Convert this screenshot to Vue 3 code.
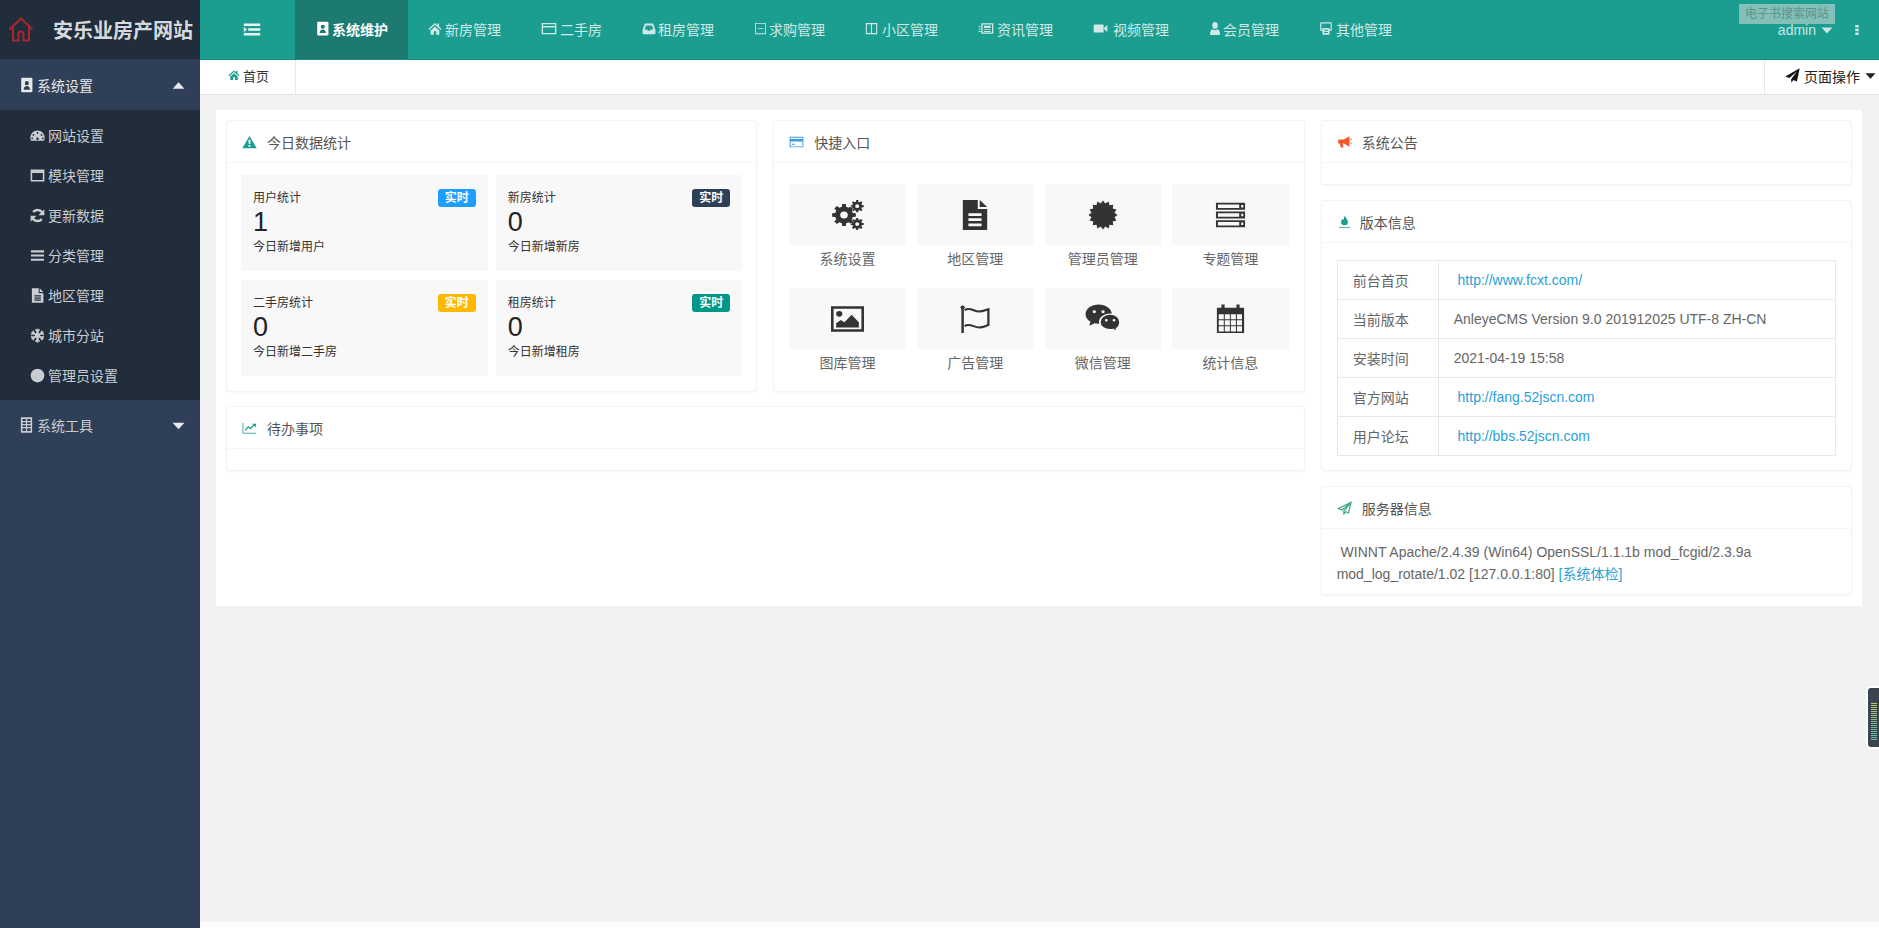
<script setup>
import { h } from 'vue'

function gear(cx, cy, R, r, hole, n) {
  let d = ''
  const step = (Math.PI * 2) / n
  for (let i = 0; i < n; i++) {
    const a = i * step
    const pts = [
      [r, a - step * 0.5],
      [r, a - step * 0.3],
      [R, a - step * 0.2],
      [R, a + step * 0.2],
      [r, a + step * 0.3],
    ]
    pts.forEach(([rad, t], k) => {
      d += (i === 0 && k === 0 ? 'M' : 'L') + (cx + rad * Math.cos(t)).toFixed(2) + ' ' + (cy + rad * Math.sin(t)).toFixed(2)
    })
  }
  d += `Z M${cx - hole} ${cy}a${hole} ${hole} 0 1 0 ${hole * 2} 0a${hole} ${hole} 0 1 0 ${-hole * 2} 0Z`
  return d
}
function burst(cx, cy, R, r, n) {
  let d = ''
  for (let i = 0; i < n * 2; i++) {
    const t = (i * Math.PI) / n
    const rad = i % 2 ? r : R
    d += (i ? 'L' : 'M') + (cx + rad * Math.cos(t)).toFixed(2) + ' ' + (cy + rad * Math.sin(t)).toFixed(2)
  }
  return d + 'Z'
}
function calendar() {
  let d = 'M1 5h5V1.500h3.500V5h13V1.500H26V5h5v26H1z'
  for (let r = 0; r < 3; r++) {
    for (let c = 0; c < 4; c++) {
      d += ` M${3 + c * 6.7} ${11.500 + r * 6.300}h5.600v5.200h-5.600z`
    }
  }
  return d
}

const paths = {
  contact: 'M5 1h15a1.500 1.500 0 0 1 1.500 1.500v19a1.500 1.500 0 0 1-1.500 1.500H5a1.500 1.500 0 0 1-1.500-1.500V2.500A1.500 1.500 0 0 1 5 1z M12.500 6a3 3 0 1 0 0 6.500 3 3 0 0 0 0-6.500z M7.500 19h10c0-3.500-2-5.500-5-5.500s-5 2-5 5.500z',
  indent: 'M1 2.500h22v4H1z M7 10h16v4H7z M1 17.500h22v4H1z M1 8l4.500 4L1 16z',
  home: 'M12 3 .8 12.700l1.500 1.600L12 6l9.700 8.300 1.500-1.600L19 9V4h-3v2.400z M4.500 15 12 8.600l7.500 6.400v7H14v-5.500h-4V22H4.500z',
  card: 'M1 3h22v18H1z M3 5v3h18V5z M3 10.500V19h18v-8.500z',
  inbox: 'M5 4h14l4 10v5.500a1.500 1.500 0 0 1-1.500 1.500h-19A1.500 1.500 0 0 1 1 19.500V14z M7 7l-2.500 6.500H9l1 2h4l1-2h4.500L17 7z',
  form: 'M2 3h20v18H2z M3.500 4.500v15h17v-15z M7 11h10v1.500H7z',
  columns: 'M1.500 3h21v18h-21z M3.500 5v14H11V5z M13 5v14h7.500V5z',
  news: 'M5 3.500h18v17H5z M7 5.500v13h14v-13z M9 7.500h10v3.500H9z M9 13h10v1.500H9z M9 16h10v1.500H9z M1 8h3v1.500H1z M1 12h3v1.500H1z M1 16h3v1.500H1z',
  video: 'M2.500 5.500h13a1.500 1.500 0 0 1 1.500 1.500v10a1.500 1.500 0 0 1-1.500 1.500h-13A1.500 1.500 0 0 1 1 17V7a1.500 1.500 0 0 1 1.500-1.500z M23 6.500v11l-5-4v-3z',
  user: 'M12 1.500a5.500 5.500 0 1 1 0 11 5.500 5.500 0 0 1 0-11z M4 22.500c-1.200 0-2-.8-2-2C2 16 4.500 13 8 13c1 1 2.500 1.500 4 1.500s3-.5 4-1.500c3.500 0 6 3 6 7.500 0 1.200-.8 2-2 2z',
  other: 'M4 2h16a2 2 0 0 1 2 2v10a2 2 0 0 1-2 2h-2v6H6v-6H4a2 2 0 0 1-2-2V4a2 2 0 0 1 2-2z M4 4v10h2v-3h12v3h2V4z M8.500 14h7v1.500h-7z M8.500 17.500h7V19h-7z',
  gauge: 'M12 4a11.500 11.500 0 0 1 11.500 11.500c0 2-.5 3.500-1.300 5H1.800C1 19 .5 17.500.5 15.500A11.500 11.500 0 0 1 12 4z M12 6.500a1.500 1.500 0 1 0 0 3 1.500 1.500 0 0 0 0-3z M5.500 9.500a1.500 1.500 0 1 0 0 3 1.500 1.500 0 0 0 0-3z M18.500 9.500a1.500 1.500 0 1 0 0 3 1.500 1.500 0 0 0 0-3z M3.500 15a1.500 1.500 0 1 0 0 3 1.500 1.500 0 0 0 0-3z M20.500 15a1.500 1.500 0 1 0 0 3 1.500 1.500 0 0 0 0-3z M10 17a2 2 0 1 0 4 0 2 2 0 0 0-4 0z',
  window: 'M1 2.500h22v19H1z M3.500 8v11h17V8z',
  bars: 'M1.500 3.500h21v3.500h-21z M1.500 10.250h21v3.500h-21z M1.500 17h21v3.500h-21z',
  file: 'M3 .5h11v8h7.500v15H3z M15.500 .5l6 6h-6z M7 11.500h10.500v2H7z M7 15h10.500v2H7z M7 18.500h10.500v2H7z',
  circle: 'M12 1a11 11 0 1 1 0 22 11 11 0 0 1 0-22z',
  building: 'M3 .5h18v23H3z M5.500 3v3h5.500V3z M13 3v3h5.500V3z M5.500 8v2.500h5.500V8z M13 8v2.500h5.500V8z M5.500 12.500V15h5.500v-2.500z M13 12.500V15h5.500v-2.500z M5.500 17v4h5.500v-4z M13 17v4h5.500v-4z',
  warn: 'M12 1.500 23.500 22.500H.5z M10.300 8l.5 7.500h2.400l.5-7.500z M10.500 17v3h3v-3z',
  creditcard: 'M1 3h22v18H1z M2.500 4.500V7h19V4.500z M2.500 11v8.500h19V11z M4.500 15h5v1.500h-5z',
  horn: 'M2 7.500h9l9-5.500v18l-9-5.500H9l1.500 7H6l-1.500-7H2z M21.500 7l2-1.500v2l-2 1.500z M21.500 14.500l2 1.500v-2l-2-1.500z',
  flame: 'M12.500 1c.5 4 5 6.500 5 11a5.500 5.500 0 0 1-11 0c0-2.500 1.500-3.500 2.500-5.500.5 1.200 1 1.800 1.700 2C11 6 11.500 3.500 12.500 1z M3 20.500h18V22H3z',
  plane: 'M23.500 .5.500 13.500l6.500 2.500L19 5.500 10 17.500V23.500l3.500-4.500 5.500 2.500z',
  up: 'M12 6 23 18H1z',
  down: 'M1 7h22L12 19z',
  dots: 'M9 2h6v5H9z M9 9.500h6v5H9z M9 17h6v5H9z',
  gears: gear(12, 16, 12, 9, 3.8, 8) + ' ' + gear(25.2, 6.6, 6.6, 4.9, 2, 8) + ' ' + gear(25.2, 25.6, 6.6, 4.9, 2, 8),
  doc: 'M3 0h16v9.500h10V32H3z M21 0l8 7.500h-8z M9 14h14v3H9z M9 19.500h14v3H9z M9 25h14v3H9z',
  burst: burst(16, 16, 15.5, 12.5, 16),
  server: 'M1 2h30v8H1z M3 4v4h22V4z M27 4.500h2.200v3H27z M1 12h30v8H1z M3 14v4h22v-4z M27 14.500h2.200v3H27z M1 22h30v8H1z M3 24v4h22v-4z M27 24.500h2.200v3H27z',
  image: 'M0 2.500h32v27H0z M2.500 5v22h27V5z M8 7.500a3 3 0 1 1 0 6 3 3 0 0 1 0-6z M5 25v-4.500l4.500-3.500 3.500 2.500 7-8 7 8V25z',
  calendar: calendar(),
}
const layered = {
  refresh: [
    { s: 'M20.500 9.500A9 9 0 0 0 5 6.500', w: 4 },
    { s: 'M3.500 14.500a9 9 0 0 0 15.500 3', w: 4 },
    { d: 'M23 2v9.500H13.500z M1 22v-9.500h9.500z' },
  ],
  snow: [
    { s: 'M12 1v22M2.500 6.500l19 11M2.500 17.500l19-11', w: 3.400 },
    { s: 'M8.500 2.500 12 6l3.500-3.500M8.500 21.500 12 18l3.500 3.500M1.500 10.500 6.500 9l-1.500-4.500M22.500 10.500 17.500 9l1.500-4.500M1.500 13.500 6.500 15l-1.500 4.500M22.500 13.500 17.500 15l1.500 4.500', w: 2 },
    { d: 'M12 7.500l4 2.300v4.400l-4 2.300-4-2.300V9.800z' },
  ],
  chart: [
    { s: 'M1.500 3v18h21', w: 1.300 },
    { s: 'M5 16l5-6 3.500 3L20 6', w: 2.200 },
    { d: 'M16 4.500h6.500V11z' },
  ],
  planeO: [{ s: 'M22.500 2 2 13l6 2.500 14.500-13.500L11 17.500V22l3-3.500 4.500 2z', w: 2 }],
  flag: [
    { s: 'M3.500 5v26', w: 2.400 },
    { d: 'M3.500 1.500a2 2 0 1 1 0 4 2 2 0 0 1 0-4z' },
    { s: 'M5.500 6.500c5-3.500 9 1.500 14 1.500 4 0 6-1.500 9-2.500v17c-3 1-5 2.500-9 2.500-5 0-9-5-14-1.500', w: 2.200 },
  ],
  wechat: [
    { d: 'M12.500 1.500C5.800 1.500 .5 6 .5 11.500c0 3.200 1.800 5.900 4.500 7.700L4 23.500l4.700-2.700c1.200.3 2.500.5 3.800.5 6.700 0 12-4.400 12-9.800S19.200 1.500 12.500 1.500z' },
    { d: 'M23 11.500c-5.300 0-9.500 3.600-9.500 8.100s4.200 8.100 9.500 8.100c1 0 2-.1 2.900-.4L29.500 30l-.8-3.400c1.900-1.500 3.300-4 3.300-7 0-4.500-3.700-8.100-9-8.100z', stroke: '#f8f8f8', w: 1.500 },
    { d: 'M8.500 7.500a1.500 1.500 0 1 0 0 3 1.500 1.500 0 0 0 0-3z M16.500 7.500a1.500 1.500 0 1 0 0 3 1.500 1.500 0 0 0 0-3z', fill: '#f8f8f8' },
    { d: 'M19.500 16.500a1.300 1.300 0 1 0 0 2.600 1.300 1.300 0 0 0 0-2.600z M26.500 16.500a1.300 1.300 0 1 0 0 2.600 1.300 1.300 0 0 0 0-2.600z', fill: '#f8f8f8' },
  ],
  house: [{ s: 'M1.500 13.500 13 2.500l11.500 11 M5 10.500V24.500h5.500V18a2.500 2.500 0 0 1 5 0v6.500H21V10.500', w: 2 }],
}

const BIG = new Set(['gears', 'doc', 'burst', 'server', 'image', 'calendar', 'flag', 'wechat'])

const Ico = (props) => {
  const vb = BIG.has(props.n) ? '0 0 32 32' : props.n === 'house' ? '0 0 26 26' : '0 0 24 24'
  const kids = paths[props.n]
    ? [h('path', { d: paths[props.n], fill: 'currentColor', 'fill-rule': 'evenodd' })]
    : (layered[props.n] || []).map((l) =>
        l.s
          ? h('path', { d: l.s, fill: 'none', stroke: 'currentColor', 'stroke-width': l.w })
          : h('path', { d: l.d, fill: l.fill || 'currentColor', stroke: l.stroke || 'none', 'stroke-width': l.w || 0, 'fill-rule': 'evenodd' }),
      )
  return h('svg', { viewBox: vb, preserveAspectRatio: 'none', 'aria-hidden': 'true' }, kids)
}
Ico.props = ['n']

const nav = [
  { t: '系统维护', i: 'contact', w: 15, g: 2, active: true },
  { t: '新房管理', i: 'home', w: 14, g: 3 },
  { t: '二手房', i: 'card', w: 16, g: 3 },
  { t: '租房管理', i: 'inbox', w: 14, g: 2 },
  { t: '求购管理', i: 'form', w: 13, g: 2 },
  { t: '小区管理', i: 'columns', w: 13, g: 4 },
  { t: '资讯管理', i: 'news', w: 16, g: 3 },
  { t: '视频管理', i: 'video', w: 15, g: 5 },
  { t: '会员管理', i: 'user', w: 12, g: 2 },
  { t: '其他管理', i: 'other', w: 14, g: 3 },
]
const subs = [
  { t: '网站设置', i: 'gauge' },
  { t: '模块管理', i: 'window' },
  { t: '更新数据', i: 'refresh' },
  { t: '分类管理', i: 'bars' },
  { t: '地区管理', i: 'file' },
  { t: '城市分站', i: 'snow' },
  { t: '管理员设置', i: 'circle' },
]
const stats = [
  { t: '用户统计', n: '1', s: '今日新增用户', c: 'blue' },
  { t: '新房统计', n: '0', s: '今日新增新房', c: 'navy' },
  { t: '二手房统计', n: '0', s: '今日新增二手房', c: 'amber' },
  { t: '租房统计', n: '0', s: '今日新增租房', c: 'teal' },
]
const quick = [
  { t: '系统设置', i: 'gears', w: 32, hh: 30 },
  { t: '地区管理', i: 'doc', w: 30, hh: 30 },
  { t: '管理员管理', i: 'burst', w: 30, hh: 30 },
  { t: '专题管理', i: 'server', w: 31, hh: 28 },
  { t: '图库管理', i: 'image', w: 33, hh: 30 },
  { t: '广告管理', i: 'flag', w: 33, hh: 30 },
  { t: '微信管理', i: 'wechat', w: 35, hh: 31 },
  { t: '统计信息', i: 'calendar', w: 29, hh: 31 },
]
const info = [
  { k: '前台首页', v: 'http://www.fcxt.com/', link: true },
  { k: '当前版本', v: 'AnleyeCMS Version 9.0 201912025 UTF-8 ZH-CN' },
  { k: '安装时间', v: '2021-04-19 15:58' },
  { k: '官方网站', v: 'http://fang.52jscn.com', link: true },
  { k: '用户论坛', v: 'http://bbs.52jscn.com', link: true },
]
</script>

<template>
  <div class="app">
    <aside class="side">
      <div class="brand">
        <Ico n="house" class="logo" />
        <span class="brand-text">安乐业房产网站</span>
      </div>
      <div class="group">
        <Ico n="contact" class="gi" />
        <span class="gt">系统设置</span>
        <Ico n="up" class="caret" />
      </div>
      <ul class="sub">
        <li v-for="s in subs" :key="s.t">
          <Ico :n="s.i" class="si" />
          <span>{{ s.t }}</span>
        </li>
      </ul>
      <div class="group dim">
        <Ico n="building" class="gi" />
        <span class="gt">系统工具</span>
        <Ico n="down" class="caret" />
      </div>
    </aside>

    <div class="main">
      <header class="top">
        <div class="toggle"><Ico n="indent" class="toggle-i" /></div>
        <nav class="nav">
          <a v-for="n in nav" :key="n.t" class="nav-item" :class="{ on: n.active }">
            <Ico :n="n.i" class="nav-i" :style="{ width: n.w + 'px', marginRight: n.g + 'px' }" />
            <span>{{ n.t }}</span>
          </a>
        </nav>
        <div class="user">
          <span>admin</span>
          <Ico n="down" class="user-c" />
          <Ico n="dots" class="user-d" />
        </div>
        <div class="tag">电子书搜索网站</div>
      </header>

      <div class="crumb">
        <div class="crumb-tab"><Ico n="home" class="crumb-h" /><span>首页</span></div>
        <div class="crumb-op">
          <Ico n="plane" class="op-p" /><span>页面操作</span><Ico n="down" class="op-c" />
        </div>
      </div>

      <div class="content">
        <div class="panel">
          <div class="left">
            <section class="card">
              <h3 class="ch"><Ico n="warn" class="ci c-teal" /><span>今日数据统计</span></h3>
              <div class="stats">
                <div v-for="s in stats" :key="s.t" class="stat">
                  <div class="stat-top">
                    <span class="stat-t">{{ s.t }}</span>
                    <span class="badge" :class="s.c">实时</span>
                  </div>
                  <div class="stat-n">{{ s.n }}</div>
                  <div class="stat-s">{{ s.s }}</div>
                </div>
              </div>
            </section>

            <section class="card">
              <h3 class="ch"><Ico n="creditcard" class="ci c-blue" /><span>快捷入口</span></h3>
              <div class="quick">
                <div v-for="q in quick" :key="q.t" class="q">
                  <div class="tile">
                    <Ico :n="q.i" class="q-i" :style="{ width: q.w + 'px', height: q.hh + 'px' }" />
                  </div>
                  <div class="q-t">{{ q.t }}</div>
                </div>
              </div>
            </section>

            <section class="card wide">
              <h3 class="ch"><Ico n="chart" class="ci c-teal" /><span>待办事项</span></h3>
              <div class="empty"></div>
            </section>
          </div>

          <div class="right">
            <section class="card">
              <h3 class="ch"><Ico n="horn" class="ci c-orange" /><span>系统公告</span></h3>
              <div class="empty"></div>
            </section>

            <section class="card">
              <h3 class="ch"><Ico n="flame" class="ci c-teal" /><span class="tight">版本信息</span></h3>
              <div class="tb-wrap">
                <table class="tb">
                  <tbody>
                    <tr v-for="r in info" :key="r.k">
                      <th>{{ r.k }}</th>
                      <td>
                        <a v-if="r.link" class="lnk">&nbsp;{{ r.v }}</a>
                        <template v-else>{{ r.v }}</template>
                      </td>
                    </tr>
                  </tbody>
                </table>
              </div>
            </section>

            <section class="card">
              <h3 class="ch"><Ico n="planeO" class="ci c-green" /><span>服务器信息</span></h3>
              <p class="srv">&nbsp;WINNT Apache/2.4.39 (Win64) OpenSSL/1.1.1b mod_fcgid/2.3.9a mod_log_rotate/1.02 [127.0.0.1:80] <a class="lnk">[系统体检]</a></p>
            </section>
          </div>
        </div>
      </div>
      <div class="foot"></div>
    </div>

    <div class="widget"><div class="meter"></div></div>
  </div>
</template>

<style>
html, body { margin: 0; padding: 0; overflow: hidden; }
</style>

<style scoped>
.app {
  display: flex;
  height: 928px;
  font-family: "Liberation Sans", "Noto Sans CJK SC", sans-serif;
  font-size: 14px;
  color: #666;
  overflow: hidden;
  position: relative;
}
svg { display: block; flex: none; }

/* sidebar */
.side { width: 200px; flex: none; background: #2e3f57; color: #c9ccd0; }
.brand {
  height: 60px;
  background: #222d3c;
  display: flex;
  align-items: center;
  box-sizing: border-box;
  border-bottom: 1px solid #2e3a4b;
  padding-left: 8px;
}
.logo { width: 26px; height: 26px; color: #a8262c; margin-bottom: 2px; }
.brand-text { margin-left: 19px; font-size: 20px; font-weight: 700; color: #d6d9dd; white-space: nowrap; }
.group { height: 50px; display: flex; align-items: center; padding-left: 19px; color: #e6e8ea; }
.group.dim { color: #c9ccd0; }
.gi { width: 15px; height: 16px; }
.gt { margin-left: 3px; }
.caret { width: 13px; height: 13px; margin-left: auto; margin-right: 15px; color: #e8eaec; }
.sub { list-style: none; margin: 0; padding: 5px 0; background: #222d3c; }
.sub li { height: 40px; display: flex; align-items: center; padding-left: 30px; }
.si { width: 15px; height: 15px; margin-right: 3px; color: #c9ccd0; }

/* header */
.main { flex: 1; min-width: 0; display: flex; flex-direction: column; background: #f2f2f2; }
.top {
  height: 60px;
  flex: none;
  box-sizing: border-box;
  border-bottom: 1px solid #17897d;
  background: #1b9e90;
  display: flex;
  align-items: stretch;
  color: #d0e9e6;
  position: relative;
}
.toggle { width: 95px; flex: none; display: flex; align-items: center; justify-content: center; padding-left: 8px; box-sizing: border-box; }
.toggle-i { width: 18px; height: 15px; color: #e7f5f3; }
.nav { display: flex; }
.nav-item { display: flex; align-items: center; padding: 0 20px 2px; white-space: nowrap; }
.nav-item.on { background: #1d7a70; color: #fff; font-weight: 700; }
.nav-i { height: 15px; }
.user { margin-left: auto; display: flex; align-items: center; padding-right: 15px; color: #c9e8e4; }
.user-c { width: 12px; height: 12px; margin-left: 5px; }
.user-d { width: 14px; height: 12px; margin-left: 17px; }
.tag {
  position: absolute;
  top: 4px;
  right: 44px;
  width: 96px;
  height: 20px;
  line-height: 20px;
  text-align: center;
  font-size: 12px;
  color: #5b938d;
  background: #84c0b9;
}

/* crumb */
.crumb {
  height: 35px;
  flex: none;
  box-sizing: border-box;
  background: #fff;
  border-bottom: 1px solid #e4e4e4;
  display: flex;
  justify-content: space-between;
  color: #333;
}
.crumb-tab {
  width: 96px;
  box-sizing: border-box;
  border-right: 1px solid #e8e8e8;
  display: flex;
  align-items: center;
  padding: 0 0 4px 28px;
  font-size: 13px;
}
.crumb-h { width: 12px; height: 12px; color: #1b9f91; margin-right: 3px; }
.crumb-op {
  width: 115px;
  box-sizing: border-box;
  border-left: 1px solid #e8e8e8;
  display: flex;
  align-items: center;
  padding: 0 0 3px 20px;
  color: #222;
}
.op-p { width: 15px; height: 15px; margin-right: 4px; color: #111; }
.op-c { width: 11px; height: 11px; margin-left: 5px; color: #222; }

/* content */
.content { flex: 1; padding: 15px 17px 0 16px; min-height: 0; }
.panel { background: #fff; padding: 10px 10px 11px; display: flex; gap: 16px; box-sizing: border-box; }
.left {
  flex: 1;
  min-width: 0;
  display: grid;
  grid-template-columns: 1fr 1fr;
  gap: 14px 16px;
  align-content: start;
}
.right { width: 531.33px; flex: none; display: flex; flex-direction: column; gap: 15px; }
.wide { grid-column: span 2; }
.card {
  border: 1px solid #f3f3f3;
  border-radius: 3px;
  box-shadow: 0 1px 2px rgba(0, 0, 0, 0.03);
  background: #fff;
  min-width: 0;
}
.ch {
  margin: 0;
  height: 42px;
  box-sizing: border-box;
  border-bottom: 1px solid #f6f6f6;
  display: flex;
  align-items: center;
  padding-left: 15px;
  font-size: 14px;
  font-weight: 400;
  color: #555;
}
.ci { width: 15px; height: 14px; margin-right: 10px; }
.tight { margin-left: -2px; }
.c-teal { color: #1b9f91; }
.c-blue { color: #3d9ae8; }
.c-orange { color: #f0582c; }
.c-green { color: #3fa98b; }
.empty { height: 21px; }

.stats { padding: 12px 14px 15px; display: grid; grid-template-columns: 1fr 1fr; gap: 9px 8px; }
.stat { height: 96px; box-sizing: border-box; background: #f8f8f8; padding: 15px 12px 0; color: #333; }
.stat-top { display: flex; justify-content: space-between; align-items: flex-start; height: 17px; }
.stat-t { font-size: 12px; line-height: 14px; margin-top: 1px; }
.badge {
  width: 38px;
  height: 18px;
  line-height: 18px;
  border-radius: 3px;
  text-align: center;
  font-size: 12px;
  font-weight: 700;
  color: #fff;
  margin-top: -1px;
}
.blue { background: #1e9fff; }
.navy { background: #2f4056; }
.amber { background: #ffb800; }
.teal { background: #009688; }
.stat-n { font-size: 27px; line-height: 30px; color: #222; }
.stat-s { font-size: 12px; line-height: 18px; margin-top: 1px; }

.quick { padding: 21px 15px 11px; display: grid; grid-template-columns: repeat(4, 1fr); gap: 15px 11px; }
.tile { height: 61px; background: #f8f8f8; display: flex; align-items: center; justify-content: center; }
.q-i { color: #333; }
.q-t { height: 28px; line-height: 28px; text-align: center; color: #666; }

.tb-wrap { padding: 17px 15px 14px; }
.tb { width: 100%; border-collapse: collapse; }
.tb th, .tb td { height: 38px; padding: 0; border: 1px solid #e8e8e8; font-weight: 400; color: #666; text-align: left; }
.tb th { width: 85px; padding-left: 15px; }
.tb td { padding-left: 15px; }
.lnk { color: #2a9fd8; }
.srv { margin: 0; padding: 12px 15px 9px; line-height: 22px; color: #666; }
.foot { height: 6px; flex: none; background: #fdfdfd; }

.widget {
  position: absolute;
  right: 0;
  top: 688px;
  width: 11px;
  height: 59px;
  background: #3c4450;
  border-radius: 3px 0 0 3px;
  box-shadow: 0 0 0 2px #fff;
}
.meter {
  position: absolute;
  left: 3px;
  top: 15px;
  width: 6px;
  height: 38px;
  background: linear-gradient(#c9c468, #6fb98f 60%, #66c2b0);
  -webkit-mask: repeating-linear-gradient(#000 0 1px, transparent 1px 2px);
  mask: repeating-linear-gradient(#000 0 1px, transparent 1px 2px);
}
</style>
